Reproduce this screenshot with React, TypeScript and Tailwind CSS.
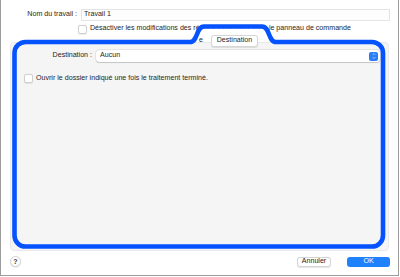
import { ChevronDown, ChevronUp } from "lucide-react";

function Checkbox({ className = "" }: { className?: string }) {
  return (
    <span
      className={
        "inline-block w-[9px] h-[9px] shrink-0 rounded-[2px] border border-[#cfcfcf] bg-white shadow-[0_0.5px_1px_rgba(0,0,0,0.08)] " +
        className
      }
    />
  );
}

function Annotation() {
  // blue marker drawn over the dialog
  return (
    <svg
      className="absolute inset-0 pointer-events-none"
      width={400}
      height={277}
      viewBox="0 0 400 277"
    >
      <rect x={197} y={28.5} width={70} height={6} fill="#ffffff" />
      <path
        d="M14.5 53 L14.5 235.5 A11 11 0 0 0 25.5 246.5 L372 246.5 A11 11 0 0 0 383 235.5 L383 53 A11 11 0 0 0 372 42 L276 42 C268 42 270 26.5 262 26.5 L204 26.5 C196 26.5 198 42 190 42 L25.5 42 A11 11 0 0 0 14.5 53 Z"
        fill="none"
        stroke="#0552ff"
        strokeWidth={4.6}
        strokeLinejoin="round"
      />
    </svg>
  );
}

export default function App() {
  return (
    <div className="relative w-[400px] h-[277px] bg-white overflow-hidden">
      <div className="w-[399px] h-[276px] border-x border-b border-[#9c9c9c] bg-white flex flex-col font-['Liberation_Sans',Arial,sans-serif] text-[7.1px] leading-none text-[#262626]">
        {/* job name */}
        <div className="mt-[9px] h-[12px] flex items-center">
          <div className="w-[76px] text-right">Nom du travail :</div>
          <div className="ml-[4px] mr-[8px] flex-1 h-[12px] flex items-center pl-[2px] border border-[#e4e4e4] bg-[#fdfdfd]">
            Travail 1
          </div>
        </div>

        {/* panel lock */}
        <div className="mt-[3px] h-[10px] flex items-center pl-[77px] gap-[3px] whitespace-nowrap">
          <Checkbox />
          <span>Désactiver les modifications des réglages effectuées sur le panneau de commande</span>
        </div>

        {/* tabs */}
        <div className="relative z-10 mt-[1px] h-[12px] flex pl-[198px]">
          <div className="w-[12px] h-[12px] pr-[8px] flex items-center justify-end overflow-hidden whitespace-nowrap">
            Mise en page
          </div>
          <div className="w-[47px] h-[12px] flex items-center justify-center rounded-[3px] border border-[#d6d6d6] bg-white shadow-[0_0.5px_1px_rgba(0,0,0,0.1)]">
            Destination
          </div>
        </div>

        {/* tab body */}
        <div className="-mt-[5px] ml-[9px] w-[379px] h-[209px] rounded-[4px] border border-[#e9e9e9] bg-[#f5f5f5] flex flex-col pt-[7px]">
          <div className="h-[12px] flex items-center pr-[8px]">
            <div className="w-[81px] text-right">Destination :</div>
            <div className="ml-[4px] flex-1 h-[12px] flex items-center pl-[4px] pr-[2px] rounded-[3px] bg-white shadow-[0_0_0_0.5px_rgba(0,0,0,0.12),0_0.5px_1px_rgba(0,0,0,0.15)]">
              <span className="flex-1">Aucun</span>
              <span className="w-[9px] h-[9px] rounded-[2px] bg-[#2a7df7] flex flex-col items-center justify-center text-white">
                <ChevronUp className="w-[6px] h-[4px]" strokeWidth={3.5} />
                <ChevronDown className="w-[6px] h-[4px]" strokeWidth={3.5} />
              </span>
            </div>
          </div>
          <div className="mt-[12px] h-[9px] flex items-center pl-[13px] gap-[3px] whitespace-nowrap">
            <Checkbox />
            <span>Ouvrir le dossier indiqué une fois le traitement terminé.</span>
          </div>
        </div>

        {/* footer */}
        <div className="mt-[5px] h-[11px] flex items-center pl-[9px] pr-[8px]">
          <div className="w-[11px] h-[11px] rounded-full border border-[#d2d2d2] bg-white shadow-[0_0.5px_1px_rgba(0,0,0,0.12)] flex items-center justify-center text-[7px] font-bold text-[#3a3a3a]">
            ?
          </div>
          <div className="ml-auto w-[34px] h-[10px] flex items-center justify-center rounded-[3px] border border-[#d4d4d4] bg-white shadow-[0_0.5px_1px_rgba(0,0,0,0.1)]">
            Annuler
          </div>
          <div className="ml-[16px] w-[43px] h-[10px] flex items-center justify-center rounded-[3px] bg-[#1f82fc] text-white">
            OK
          </div>
        </div>
      </div>
      <Annotation />
    </div>
  );
}
